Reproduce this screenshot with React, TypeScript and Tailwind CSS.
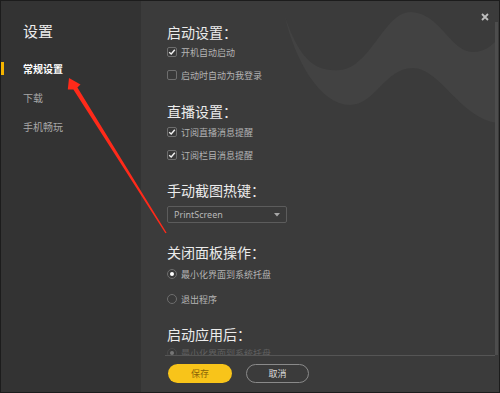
const CJK = { fontFamily: '"Noto Sans CJK SC", "Noto Sans", sans-serif' };

function Check({ on, label }: { on: boolean; label: string }) {
  return (
    <div className="flex h-[14px] items-center gap-[4px]">
      <span className="flex h-[10px] w-[10px] items-center justify-center rounded-[2px] border border-[#6e6e6e] bg-[#393939]">
        {on && (
          <svg width="8" height="8" viewBox="0 0 8 8">
            <path d="M1.2 4.2 L3.2 6 L6.8 1.8" fill="none" stroke="#f2f2f2" strokeWidth="1.4" />
          </svg>
        )}
      </span>
      <span className="text-[9px] leading-none text-[#b4b4b4]">{label}</span>
    </div>
  );
}

function Radio({ on, label }: { on: boolean; label: string }) {
  return (
    <div className="flex h-[14px] items-center gap-[4px]">
      <span className="flex h-[10px] w-[10px] items-center justify-center rounded-full border border-[#6e6e6e] bg-[#393939]">
        {on && <span className="h-[4px] w-[4px] rounded-full bg-white" />}
      </span>
      <span className="text-[9px] leading-none text-[#b4b4b4]">{label}</span>
    </div>
  );
}

function Heading({ text, mt }: { text: string; mt: string }) {
  return <div className={`flex h-[20px] items-center text-[14px] leading-none text-[#ececec] ${mt}`}>{text}</div>;
}

export default function App() {
  return (
    <div className="relative flex h-[393px] w-[500px] overflow-hidden border border-[#1c1c1c] bg-[#3b3b3b]" style={CJK}>
      {/* sidebar */}
      <div className="relative flex w-[140px] shrink-0 flex-col bg-[#333333]">
        <div className="ml-[22px] mt-[19px] flex h-[20px] items-center text-[15px] leading-none text-[#ececec]">设置</div>
        <div className="relative mt-[21px] flex h-[16px] items-center">
          <span className="absolute left-0 top-[1px] h-[13px] w-[3px] bg-[#f5b400]" />
          <span className="ml-[22px] text-[10px] font-bold leading-none text-white">常规设置</span>
        </div>
        <div className="ml-[22px] mt-[13px] flex h-[16px] items-center text-[10px] leading-none text-[#a8a8a8]">下载</div>
        <div className="ml-[22px] mt-[13px] flex h-[16px] items-center text-[10px] leading-none text-[#a8a8a8]">手机畅玩</div>
      </div>

      {/* main */}
      <div className="relative flex flex-1 flex-col">
        <svg className="absolute left-0 top-0" width="358" height="391" viewBox="141 1 358 391">
          <path
            d="M285 17 C300 60 315 72 340 70 C370 68 385 12 410 12 C440 12 450 52 473 52 C485 52 492 45 497 40 L497 123 C460 118 440 68 413 68 C385 68 375 105 350 105 C320 105 295 60 285 17 Z"
            fill="#424242"
          />
        </svg>
        <svg className="absolute right-[10px] top-[12px]" width="8" height="8" viewBox="0 0 8 8">
          <path d="M1 1 L7 7 M7 1 L1 7" stroke="#bdbdbd" strokeWidth="1.8" />
        </svg>
        <div className="absolute right-[1px] top-[21px] h-[333px] w-[3px] bg-[#4d4d4d]" />

        <div className="relative h-[354px] overflow-hidden pl-[26px]">
          <Heading text="启动设置：" mt="mt-[21px]" />
          <div className="mt-[3px]"><Check on label="开机自动启动" /></div>
          <div className="mt-[9px]"><Check on={false} label="启动时自动为我登录" /></div>
          <Heading text="直播设置：" mt="mt-[19px]" />
          <div className="mt-[4px]"><Check on label="订阅直播消息提醒" /></div>
          <div className="mt-[9px]"><Check on label="订阅栏目消息提醒" /></div>
          <Heading text="手动截图热键：" mt="mt-[18px]" />
          <div className="mt-[6px] flex h-[17px] w-[120px] items-center justify-between rounded-[2px] border border-[#5c5c5c] bg-[#3a3a3a] pl-[6px] pr-[6px]">
            <span className="text-[9px] leading-none text-[#b8b8b8]" style={{ fontFamily: '"Noto Sans", sans-serif' }}>PrintScreen</span>
            <svg width="6" height="4" viewBox="0 0 6 4"><path d="M0 0 L6 0 L3 3.5 Z" fill="#a8a8a8" /></svg>
          </div>
          <Heading text="关闭面板操作：" mt="mt-[19px]" />
          <div className="mt-[5px]"><Radio on label="最小化界面到系统托盘" /></div>
          <div className="mt-[11px]"><Radio on={false} label="退出程序" /></div>
          <Heading text="启动应用后：" mt="mt-[18px]" />
          <div className="mt-[2px] opacity-30"><Radio on label="最小化界面到系统托盘" /></div>
        </div>

        <div className="ml-[24px] mr-[4px] h-[1px] bg-[#555555]" />
        <div className="ml-[27px] mt-[8px] flex gap-[14px]">
          <button className="flex h-[19px] w-[64px] items-center justify-center rounded-full bg-[#f8c41a] text-[9px] leading-none text-[#8a6508]">保存</button>
          <button className="flex h-[19px] w-[63px] items-center justify-center rounded-full border border-[#8a8a8a] text-[9px] leading-none text-[#dcdcdc]">取消</button>
        </div>
      </div>

      {/* annotation arrow */}
      <svg className="pointer-events-none absolute left-0 top-0" width="500" height="393" viewBox="1 1 500 393">
        <polygon points="69,78 80.5,84.5 77.4,87.6 166.6,232.7 165.4,233.3 73.4,89.6 67.8,89.5" fill="#ff2a1a" />
      </svg>
    </div>
  );
}
